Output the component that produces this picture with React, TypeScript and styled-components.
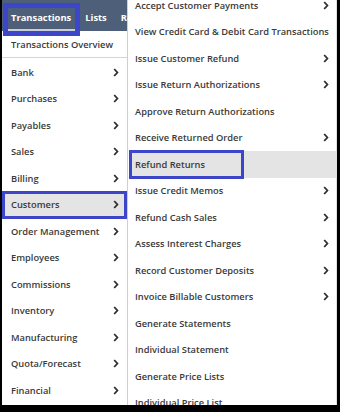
import React from 'react'
import styled, { createGlobalStyle } from 'styled-components'

const GlobalStyle = createGlobalStyle`
  html, body {
    margin: 0;
    padding: 0;
    background: #000;
  }
  body {
    font-family: "Open Sans", "Liberation Sans", sans-serif;
  }
`

const Frame = styled.div`
  width: 340px;
  height: 412px;
  box-sizing: border-box;
  padding: 0 3px 7px 2px;
  background: #000;
`

const Screen = styled.div`
  display: flex;
  height: 100%;
  background: #fff;
  overflow: hidden;
`

const LeftCol = styled.div`
  width: 125px;
  flex: none;
  display: flex;
  flex-direction: column;
`

const NavBar = styled.div`
  height: 31px;
  flex: none;
  display: flex;
  align-items: stretch;
  background: #4e5f7a;
  padding-left: 6px;
  gap: 7px;
`

const Tab = styled.div<{ $active?: boolean; $marked?: boolean }>`
  position: relative;
  display: flex;
  align-items: center;
  margin-top: 8px;
  padding: 0 4px 2px 3px;
  color: #fff;
  font-size: 9.4px;
  font-weight: 700;
  white-space: nowrap;
  border-bottom: ${({ $active }) => ($active ? '2px solid #c9ced8' : '2px solid transparent')};
  outline: ${({ $marked }) => ($marked ? '5px solid #3d45c9' : 'none')};
  z-index: 2;
`

const Overview = styled.div`
  height: 26px;
  display: flex;
  align-items: center;
  padding-left: 9px;
  font-size: 9.3px;
  font-weight: 600;
  color: #3a3a3a;
  border-bottom: 1px solid #d4d4d4;
  margin-bottom: 1px;
`

const MenuList = styled.div<{ $shift?: number }>`
  display: flex;
  flex-direction: column;
  margin-top: ${({ $shift }) => $shift ?? 0}px;
`

const Item = styled.div<{ $selected?: boolean; $indent: number; $arrowAt: number }>`
  position: relative;
  height: 26.5px;
  flex: none;
  display: flex;
  align-items: center;
  justify-content: space-between;
  padding-left: ${({ $indent }) => $indent}px;
  padding-right: ${({ $arrowAt }) => $arrowAt}px;
  font-size: 9.3px;
  font-weight: 600;
  color: #3a3a3a;
  white-space: nowrap;
  background: ${({ $selected }) => ($selected ? '#e4e4e4' : 'transparent')};
`

const SubMenu = styled.div`
  flex: 1;
  border-left: 1px solid #cfcfcf;
  border-right: 1px solid #e2e2e2;
  padding-left: 1px;
`

const Marker = styled.span<{ $width: string }>`
  position: absolute;
  left: 0;
  width: ${({ $width }) => $width};
  top: -1px;
  bottom: -1px;
  box-sizing: border-box;
  border: 3px solid #3d45c9;
  pointer-events: none;
`

function Chevron() {
  return (
    <svg width="6" height="9" viewBox="0 0 6 9">
      <polyline points="1.2,1 4.4,4.5 1.2,8" fill="none" stroke="#2f2f2f" strokeWidth="1.8" />
    </svg>
  )
}

const leftItems = [
  'Bank',
  'Purchases',
  'Payables',
  'Sales',
  'Billing',
  'Customers',
  'Order Management',
  'Employees',
  'Commissions',
  'Inventory',
  'Manufacturing',
  'Quota/Forecast',
  'Financial',
]

const subItems: [string, boolean][] = [
  ['Accept Customer Payments', true],
  ['View Credit Card & Debit Card Transactions', false],
  ['Issue Customer Refund', true],
  ['Issue Return Authorizations', true],
  ['Approve Return Authorizations', false],
  ['Receive Returned Order', true],
  ['Refund Returns', false],
  ['Issue Credit Memos', true],
  ['Refund Cash Sales', true],
  ['Assess Interest Charges', true],
  ['Record Customer Deposits', true],
  ['Invoice Billable Customers', true],
  ['Generate Statements', false],
  ['Individual Statement', false],
  ['Generate Price Lists', false],
  ['Individual Price List', false],
]

export default function App() {
  return (
    <>
      <GlobalStyle />
      <Frame>
        <Screen>
          <LeftCol>
            <NavBar>
              <Tab $active $marked>Transactions</Tab>
              <Tab>Lists</Tab>
              <Tab>Reports</Tab>
            </NavBar>
            <Overview>Transactions Overview</Overview>
            <MenuList>
              {leftItems.map(name => (
                <Item key={name} $indent={9} $arrowAt={8} $selected={name === 'Customers'}>
                  <span>{name}</span>
                  <Chevron />
                  {name === 'Customers' && <Marker $width="100%" />}
                </Item>
              ))}
            </MenuList>
          </LeftCol>
          <SubMenu>
            <MenuList $shift={-8}>
              {subItems.map(([name, more]) => (
                <Item key={name} $indent={6} $arrowAt={7} $selected={name === 'Refund Returns'}>
                  <span>{name}</span>
                  {more && <Chevron />}
                  {name === 'Refund Returns' && <Marker $width="115px" />}
                </Item>
              ))}
            </MenuList>
          </SubMenu>
        </Screen>
      </Frame>
    </>
  )
}
